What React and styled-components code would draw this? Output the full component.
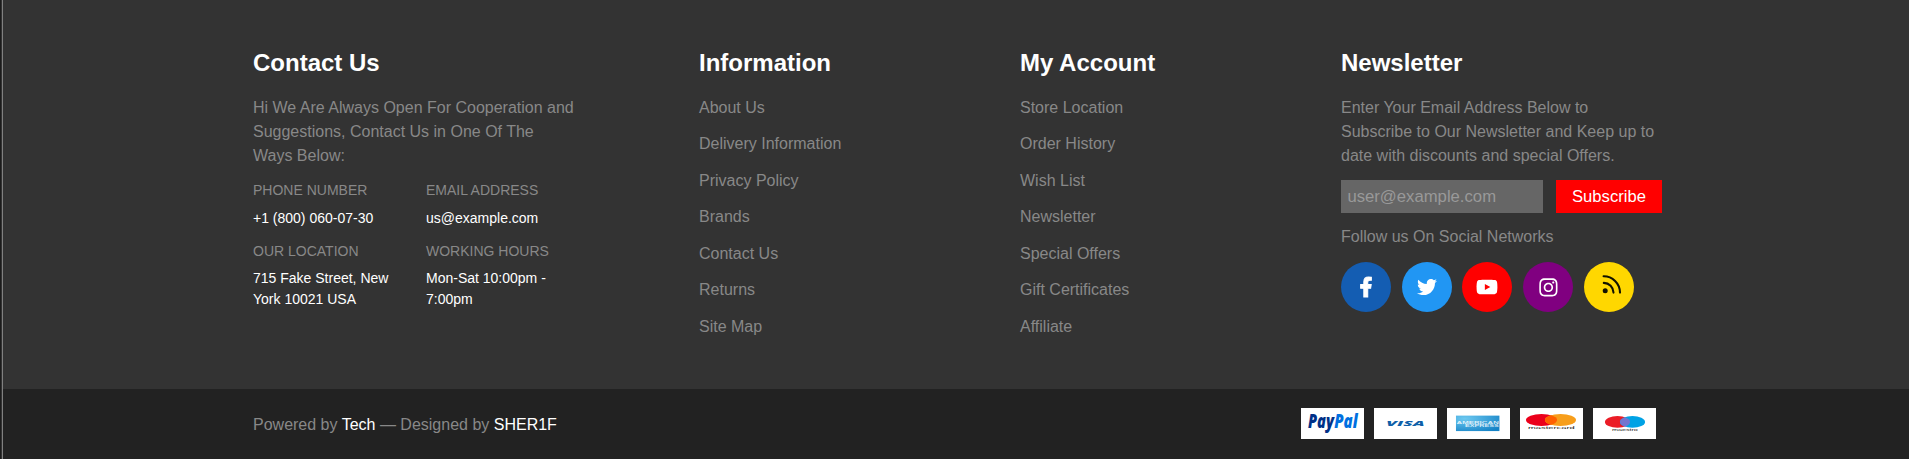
import React from "react";
import styled, { createGlobalStyle } from "styled-components";
import { FaFacebookF, FaTwitter, FaYoutube, FaInstagram } from "react-icons/fa";

const Global = createGlobalStyle`
  * { box-sizing: border-box; }
  body { margin: 0; background: #333; font-family: "Liberation Sans", Arial, sans-serif; font-size: 16px; line-height: 24px; color: #888; }
  h3, p, ul, dl, dd { margin: 0; padding: 0; }
  #root { display: flow-root; }
`;
const Footer = styled.footer`
  display: flex;
  flex-direction: column;
  height: 459px;
  border-left: 1px solid #1b1b1b;
  box-shadow: inset 1px 0 #333, inset 2px 0 #808080;
`;
const Main = styled.div`
  display: grid;
  grid-template-columns: 446px 321px 321px 322px;
  height: 389px;
  padding: 48px 0 0 252px;
`;
const Title = styled.h3`
  color: #fff;
  font-size: 24px;
  line-height: 29px;
  margin-bottom: 19px;
`;
const Copy = styled.p`
  width: 322px;
`;
const Details = styled.dl`
  display: grid;
  grid-template-columns: 143px 143px;
  column-gap: 30px;
  row-gap: 12px;
  margin-top: 12px;
  font-size: 14px;
  line-height: 21px;
`;
const Detail = styled.div``;
const Label = styled.dt`
  text-transform: uppercase;
  margin-bottom: 6.6px;
`;
const Value = styled.dd`
  color: #fff;
`;
const Links = styled.ul`
  && { margin-top: -0.5px; }
  list-style: none;
  display: flex;
  flex-direction: column;
  gap: 12.5px;
`;
const Link = styled.a`
  color: inherit;
  text-decoration: none;
`;
const Form = styled.form`
  display: flex;
  gap: 13px;
  margin: 12px 0;
  height: 33px;
`;
const Email = styled.input`
  width: 202px;
  border: 0;
  padding: 0 6.4px;
  background: #666;
  color: #fff;
  font: 16.7px "Liberation Sans", Arial, sans-serif;
  &::placeholder { color: #999; opacity: 1; }
`;
const Submit = styled.button`
  width: 106px;
  border: 0;
  padding: 0;
  background: #f00;
  color: #fff;
  font: 16.64px "Liberation Sans", Arial, sans-serif;
`;
const Socials = styled.div`
  display: flex;
  gap: 10.7px;
  margin-top: 13px;
`;
const Social = styled.a`
  display: flex;
  align-items: center;
  justify-content: center;
  width: 50px;
  height: 50px;
  border-radius: 50%;
  background: ${(p) => p.$bg};
  color: #fff;
  font-size: 20px;

  svg {
    width: auto;
    height: ${(p) => p.$size || 20}px;
    overflow: visible;
    stroke-width: ${(p) => p.$bold || 0};
  }
`;
const Bottom = styled.div`
  display: flex;
  justify-content: space-between;
  align-items: flex-start;
  flex: 1;
  margin-left: 2px;
  padding: 19px 253px 0 250px;
  background: #222;
`;
const Credit = styled.p`
  padding-top: 5px;
`;
const Strong = styled.span`
  color: #fff;
`;
const Payments = styled.div`
  display: flex;
  gap: 10.3px;
`;
const Card = styled.svg`
  display: block;
  width: 62.8px;
  height: 31px;
  background: #fff;
`;
const RssDrawing = styled.svg`
  && { stroke-width: 2.1; }
`;

const information = ["About Us", "Delivery Information", "Privacy Policy", "Brands", "Contact Us", "Returns", "Site Map"];
const account = ["Store Location", "Order History", "Wish List", "Newsletter", "Special Offers", "Gift Certificates", "Affiliate"];
const details = [
  ["Phone Number", "+1 (800) 060-07-30"],
  ["Email Address", "us@example.com"],
  ["Our Location", "715 Fake Street, New York 10021 USA"],
  ["Working Hours", "Mon-Sat 10:00pm - 7:00pm"],
];

const LinkColumn = ({ title, items }) => (
  <section>
    <Title>{title}</Title>
    <Links>{items.map((t) => <li key={t}><Link>{t}</Link></li>)}</Links>
  </section>
);

const RssIcon = () => (
  <RssDrawing viewBox="0 0 50 50" fill="none" stroke="#111100" strokeLinecap="round">
    <path d="M19.6 14.3A16.3 16.6 0 0 1 36 30.6" />
    <path d="M19.8 20.9A9.8 9.8 0 0 1 29.5 30.6" />
    <circle cx="21.2" cy="28.7" r="2.5" fill="#111100" stroke="none" />
  </RssDrawing>
);

export default function App() {
  return (
    <>
      <Global />
      <Footer>
        <Main>
          <section>
            <Title>Contact Us</Title>
            <Copy>Hi We Are Always Open For Cooperation and Suggestions, Contact Us in One Of The Ways Below:</Copy>
            <Details>
              {details.map(([k, v]) => (
                <Detail key={k}><Label>{k}</Label><Value>{v}</Value></Detail>
              ))}
            </Details>
          </section>
          <LinkColumn title="Information" items={information} />
          <LinkColumn title="My Account" items={account} />
          <section>
            <Title>Newsletter</Title>
            <Copy>Enter Your Email Address Below to Subscribe to Our Newsletter and Keep up to date with discounts and special Offers.</Copy>
            <Form>
              <Email placeholder="user@example.com" />
              <Submit type="button">Subscribe</Submit>
            </Form>
            <Copy>Follow us On Social Networks</Copy>
            <Socials>
              <Social $bg="#145db2" $bold={26}><FaFacebookF /></Social>
              <Social $bg="#2196f3"><FaTwitter /></Social>
              <Social $bg="#f00" $size={22}><FaYoutube /></Social>
              <Social $bg="#800080" $size={20.8}><FaInstagram /></Social>
              <Social $bg="#ffd700" $size={50}><RssIcon /></Social>
            </Socials>
          </section>
        </Main>
        <Bottom>
          <Credit>Powered by <Strong>Tech</Strong> — Designed by <Strong>SHER1F</Strong></Credit>
          <Payments>
            <Card viewBox="0 0 63 31">
              <g fontFamily="Open Sans" fontSize="19.5" fontWeight="800" fontStyle="italic">
                <text x="7" y="20.3" textLength="26" lengthAdjust="spacingAndGlyphs" fill="#003087">Pay</text>
                <text x="33.3" y="20.3" textLength="23.5" lengthAdjust="spacingAndGlyphs" fill="#0070e0">Pal</text>
              </g>
            </Card>
            <Card viewBox="0 0 63 31">
              <text x="12.3" y="18.3" fontFamily="Open Sans" fontSize="7.4" fontWeight="800" fontStyle="italic" textLength="38.5" lengthAdjust="spacingAndGlyphs" fill="#0e5fa8">VISA</text>
            </Card>
            <Card viewBox="0 0 63 31">
              <defs>
                <radialGradient id="amex" cx="0.2" cy="0.2" r="1">
                  <stop offset="0" stopColor="#6cc8f0" />
                  <stop offset="1" stopColor="#1482c6" />
                </radialGradient>
              </defs>
              <rect x="9" y="7.6" width="43.6" height="15.5" fill="url(#amex)" />
              <g fill="#fff" fillOpacity="0.8" fontFamily="Liberation Sans" fontWeight="700" fontSize="3.8">
                <text x="9.5" y="15.6" textLength="42.5" lengthAdjust="spacingAndGlyphs">AMERICAN</text>
                <text x="18" y="19.3" textLength="34" lengthAdjust="spacingAndGlyphs">EXPRESS</text>
              </g>
            </Card>
            <Card viewBox="0 0 63 31">
              <ellipse cx="21.6" cy="12" rx="15.6" ry="6" fill="#eb001b" />
              <ellipse cx="40.6" cy="12" rx="15.6" ry="6" fill="#f79e1b" />
              <path d="M31.1 7.24a15.6 6 0 0 1 0 9.52a15.6 6 0 0 1 0-9.52z" fill="#ff5f00" />
              <text x="8" y="21" fontFamily="Liberation Sans" fontSize="4" textLength="47" lengthAdjust="spacingAndGlyphs" fill="#222">mastercard</text>
            </Card>
            <Card viewBox="0 0 63 31">
              <ellipse cx="24.6" cy="13.9" rx="12.6" ry="5.9" fill="#eb1c26" />
              <ellipse cx="39.6" cy="13.9" rx="12.6" ry="5.9" fill="#00a2e5" />
              <path d="M32.1 9.16a12.6 5.9 0 0 1 0 9.48a12.6 5.9 0 0 1 0-9.48z" fill="#7375cf" />
              <text x="19" y="23" fontFamily="Liberation Sans" fontSize="4" textLength="26" lengthAdjust="spacingAndGlyphs" fill="#222">maestro</text>
            </Card>
          </Payments>
        </Bottom>
      </Footer>
    </>
  );
}
